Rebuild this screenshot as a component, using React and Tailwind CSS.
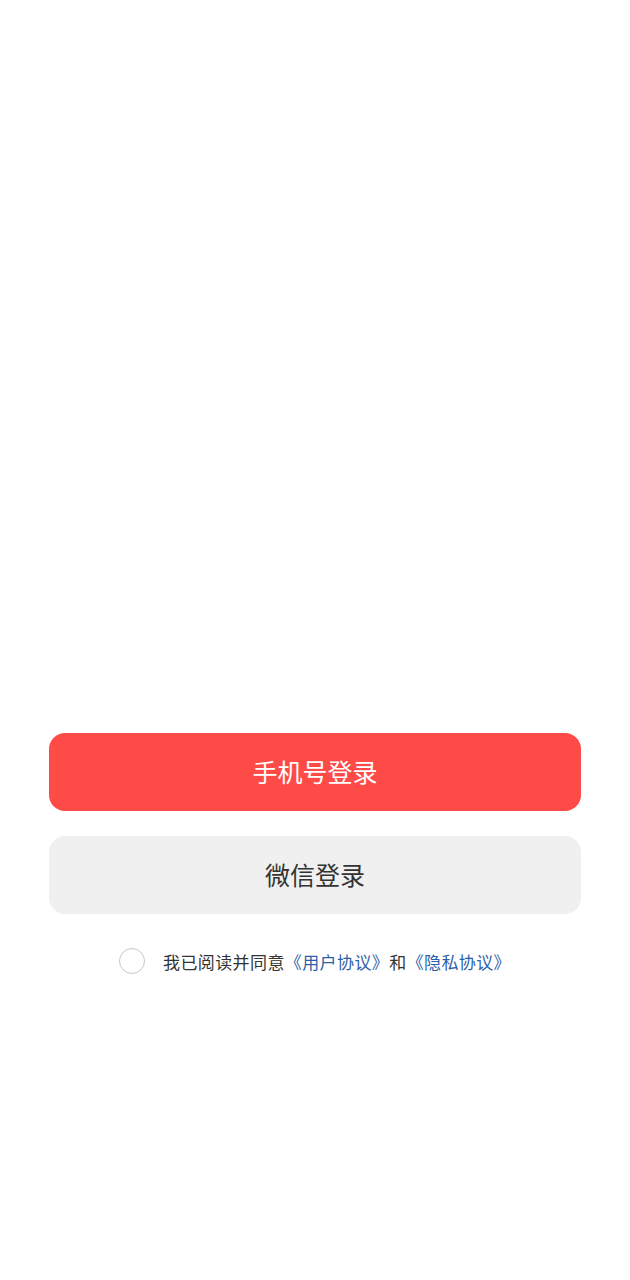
export default function App() {
  const font = { fontFamily: '"Noto Sans CJK SC", "Noto Sans", sans-serif' };
  return (
    <div className="w-[630px] h-[1280px] bg-white flex flex-col items-center" style={font}>
      <div className="h-[733px] shrink-0" />
      <button className="w-[532px] h-[78px] rounded-[16px] bg-[#ff4b47] text-white text-[25px] flex items-center justify-center">
        手机号登录
      </button>
      <button className="mt-[25px] w-[532px] h-[78px] rounded-[16px] bg-[#f0f0f0] text-[#333333] text-[25px] flex items-center justify-center">
        微信登录
      </button>
      <div className="mt-[34px] flex items-center w-[532px] pl-[70px]">
        <div className="w-[26px] h-[26px] rounded-full border-[1.5px] border-[#c8c8c8] shrink-0" />
        <div className="ml-[18px] text-[17px] tracking-[0.4px] text-[#333333] whitespace-nowrap leading-none">
          我已阅读并同意<span className="text-[#2d5fa8]">《用户协议》</span>和<span className="text-[#2d5fa8]">《隐私协议》</span>
        </div>
      </div>
    </div>
  );
}
